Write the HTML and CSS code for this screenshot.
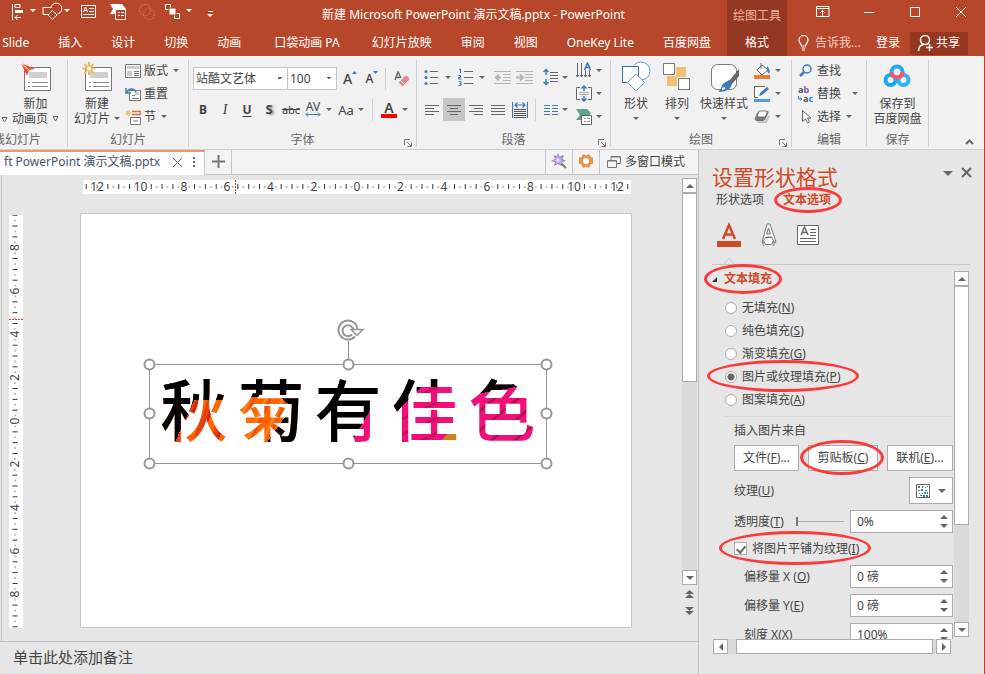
FILE: index.html
```html
<!DOCTYPE html>
<html lang="zh-CN">
<head>
<meta charset="utf-8">
<title>新建 Microsoft PowerPoint 演示文稿.pptx - PowerPoint</title>
<link rel="stylesheet" href="styles.css">
</head>
<body>
<div class="app">
<header class="top">
  <div class="titlebar">
    <div class="qat">
      <svg width="200" height="18" viewBox="0 0 200 18" fill="none" stroke="#fff">
        <path d="M.5 1v16M3 1.500h5v3H3z"/><path d="M3 7.500h8M3 8.500h8M3 9.500h8" /><path d="M3 14.500h6M5.500 12l-2.500 2.500L5.500 17"/>
        <path d="M18 6h6l-3 3z" fill="#fff" stroke="none"/>
        <path d="M36 11.500h-5v-7h9M39 4a5.500 5.500 0 1 1 6.500 7M40.500 7.500l4.500 4.500-4.500 4.500-4.500-4.500z"/>
        <path d="M52 6h6l-3 3z" fill="#fff" stroke="none"/>
        <path d="M69.500 2.500h14v12h-14zM77 5.500h5M77 8.500h5M71 11.500h11M71.500 9l2-5 2 5M72 7.500h3"/>
        <path d="M98 1h12l4 5h-11v5h-5l3-5z" fill="#fff" stroke="none"/><path d="M103.500 6.500h10v10h-10z" fill="#b7472a"/><path d="M106 9.500h2M109 9.500h3M106 12.500h2M109 12.500h3"/>
        <g stroke="#d8745b" stroke-dasharray="2 1"><circle cx="133" cy="7" r="5.500"/><circle cx="137" cy="11" r="5.500"/></g>
        <path d="M153.500 1.500h5v5h-5zM162.500 10.500h5v5h-5z"/><path d="M157 5h7v7h-7z" fill="#fff" stroke="#b7472a"/>
        <path d="M174 6h6l-3 3z" fill="#fff" stroke="none"/>
        <path d="M196 8.500h5"/><path d="M195 11h6l-3 3z" fill="#fff" stroke="none"/>
      </svg>
    </div>
    <div class="title">新建 Microsoft PowerPoint 演示文稿.pptx - PowerPoint</div>
  </div>
  <nav class="tabs">
    <a href="#">Slide</a><a href="#">插入</a><a href="#">设计</a><a href="#">切换</a><a href="#">动画</a><a href="#" class="wide">口袋动画 PA</a><a href="#">幻灯片放映</a><a href="#">审阅</a><a href="#">视图</a><a href="#">OneKey Lite</a><a href="#">百度网盘</a>
  </nav>
  <div class="context"><span>绘图工具</span><a href="#">格式</a></div>
  <div class="winbtns">
    <button aria-label="功能区显示选项"><svg width="14" height="12" fill="none" stroke="#fff"><path d="M.5.5h12.500v10H.5zM.5 2.500h12.500M6.500 10V4.500M4.500 6.500l2-2 2 2"/></svg></button>
    <button aria-label="最小化"><svg width="12" height="12" stroke="#fff"><path d="M1 6.500h10"/></svg></button>
    <button aria-label="最大化"><svg width="12" height="12" fill="none" stroke="#fff"><path d="M1.500 1.500h9v9h-9z"/></svg></button>
    <button aria-label="关闭"><svg width="12" height="12" stroke="#fff"><path d="M1 1l10 10M11 1L1 11"/></svg></button>
  </div>
  <div class="account">
    <a href="#" class="tell"><svg width="11" height="16" fill="none" stroke="#fff" stroke-width="1.200"><path d="M3.500 11c0-2-2.500-3-2.500-6a4.500 4.500 0 0 1 9 0c0 3-2.500 4-2.500 6zM3.500 13h4M4 15h3"/></svg>告诉我...</a>
    <a href="#" class="login">登录</a>
    <button class="share"><svg width="17" height="18" fill="none" stroke="#fff" stroke-width="1.500"><circle cx="8" cy="6" r="4.500"/><path d="M1.500 17c0-4 2-6 5-6.500M9 13.500h7M12.500 10v7"/></svg>共享</button>
  </div>
</header>

<section class="ribbon">
  <div class="group anim">
    <div class="gbody">
      <svg class="edge" width="7" height="6" fill="#fff" stroke="#666"><path d="M1 .5h5L3.500 5z"/></svg>
      <button class="big"><svg width="32" height="32" fill="none"><path d="M4.500 7.500h26v23h-26z" fill="#fff" stroke="#777"/><path d="M9 12h18v6H9z" fill="#d0d0d0"/><path d="M8 22.500h2M12 22.500h16M8 26.500h2M12 26.500h16" stroke="#888"/><path d="M1 3l14 6-6 1-2 6z" fill="#f0502d"/><path d="M1 3l8 7" stroke="#fff"/></svg><span>新加</span><span class="line">动画页 <svg width="7" height="6" fill="#fff" stroke="#666"><path d="M1 .5h5L3.500 5z"/></svg></span></button>
    </div>
    <div class="glabel">线幻灯片</div>
  </div>
  <div class="group slides">
    <div class="gbody">
      <button class="big"><svg width="32" height="32" fill="none"><path d="M4.500 7.500h26v23h-26z" fill="#fff" stroke="#777"/><path d="M9 12h18v6H9z" fill="#d0d0d0"/><path d="M8 22.500h2M12 22.500h16M8 26.500h2M12 26.500h16" stroke="#888"/><g stroke="#e9b962" stroke-width="2"><path d="M8 2v13M1.500 8.500h13M3.500 4l9 9M12.500 4l-9 9"/></g><circle cx="8" cy="8.500" r="2.500" fill="#fff" stroke="#e9b962"/></svg><span>新建</span><span class="line">幻灯片 <i class="tri"></i></span></button>
      <div class="stack">
        <button><svg width="16" height="14" fill="none" stroke="#777"><path d="M.5.5h15v13H.5z" fill="#fff"/><path d="M2 2h12v3H2z" fill="#ccc" stroke="none"/><path d="M2 7h5v5H2z" fill="#ccc" stroke="none"/><path d="M9 7.500h5M9 9.500h5M9 11.500h5"/></svg>版式<i class="tri"></i></button>
        <button><svg width="16" height="14" fill="none" stroke="#777"><path d="M4.500 3.500h11v10h-11z" fill="#fff"/><path d="M10 5h4v3h-4z" fill="#ccc" stroke="none"/><path d="M7 8.500h3M7 11.500h7"/><path d="M2 5c2-4 7-4 9 0M1 1v5h5" stroke="#3c7ab8" stroke-width="1.500"/></svg>重置</button>
        <button><svg width="16" height="16" fill="none" stroke="#777"><path d="M3 1v6M0 4h6M1 2l4 4M5 2L1 6" stroke="#e9b962"/><path d="M7 2.500h8.500v3H7" stroke="#e07030" stroke-width="1.500"/><path d="M5.500 8.500h10v7h-10z" fill="#fff"/><path d="M8 12h5"/></svg>节<i class="tri"></i></button>
      </div>
    </div>
    <div class="glabel">幻灯片</div>
  </div>
  <div class="group font">
    <div class="gbody col">
      <div class="frow">
        <select class="face" aria-label="字体"><option>站酷文艺体</option></select><select class="size" aria-label="字号"><option>100</option></select>
        <button class="grow" aria-label="增大字号"><b>A</b><svg width="5" height="3"><path d="M0 3L2.500 0 5 3z" fill="#3c7ab8"/></svg></button>
        <button class="shrink" aria-label="减小字号"><b>A</b><svg width="5" height="3"><path d="M0 0h5L2.500 3z" fill="#3c7ab8"/></svg></button>
        <i class="sep"></i>
        <button class="clear" aria-label="清除格式"><svg width="16" height="16" fill="none"><path d="M1 9l3-8 3 6M2 6.500h4" stroke="#666" stroke-width="1.500"/><path d="M5 11l6-6q1-1 2 0l2 2q1 1 0 2l-6 6H8l-3-3z" fill="#e8869a"/><path d="M6 9l4 4" stroke="#fff"/></svg></button>
      </div>
      <div class="brow">
        <button><b>B</b></button><button><em>I</em></button><button><b class="u">U</b></button><button><b class="sh">S</b></button><button class="strike"><s>abc</s></button>
        <button class="av"><span>AV</span><svg width="16" height="5" fill="none" stroke="#3c7ab8"><path d="M1 2.500h14M3 .5l-2 2 2 2M13 .5l2 2-2 2"/></svg></button><i class="tri"></i>
        <button class="aa">Aa</button><i class="tri"></i><i class="sep"></i>
        <button class="color"><b>A</b></button><i class="tri"></i>
      </div>
    </div>
    <div class="glabel">字体</div>
    <svg class="launch" width="8" height="8" fill="none" stroke="#777"><path d="M.5 6V.5H6M3 3l4 4M7.500 3.500v4h-4"/></svg>
  </div>
  <div class="group para">
    <div class="gbody">
      <div class="pmain">
        <div class="prow">
          <svg width="70" height="18" fill="none" stroke="#666"><path d="M6 3.500h8M6 9.500h8M6 15.500h8"/><g fill="#3c7ab8" stroke="none"><circle cx="2" cy="3.500" r="1.500"/><circle cx="2" cy="9.500" r="1.500"/><circle cx="2" cy="15.500" r="1.500"/></g><path d="M21 8h6l-3 3z" fill="#666" stroke="none"/><path d="M40 3.500h9M40 9.500h9M40 15.500h9"/><path d="M35 2l1.500-1v4M34.500 7.500h2v2h-2v1.500h3M34.500 13.500h2.500v4h-2.500M35 15.500h2" stroke="#3c7ab8"/><path d="M55 8h6l-3 3z" fill="#666" stroke="none"/></svg>
          <svg width="40" height="18" fill="none" stroke="#b4b4b4"><path d="M0 3.500h17M9 6.500h8M9 9.500h8M9 12.500h8M0 15.500h17M22 3.500h17M31 6.500h8M31 9.500h8M31 12.500h8M22 15.500h17"/><path d="M7 9.500H2M5 6.500l-3 3 3 3M22 9.500h6M26 6.500l3 3-3 3" stroke-width="2"/></svg>
          <svg width="26" height="18" fill="none" stroke="#666"><path d="M7 4.500h8M7 7.500h8M7 10.500h8M7 13.500h8"/><path d="M3 2v5M.5 4L3 1.500 5.500 4M3 11v5M.5 14L3 16.500 5.500 14" stroke="#3c7ab8" stroke-width="1.500"/><path d="M19 8h6l-3 3z" fill="#666" stroke="none"/></svg>
        </div>
        <div class="prow two">
          <button aria-label="左对齐"><svg width="14" height="12" stroke="#666"><path d="M0 1.500h14M0 4.500h9M0 7.500h14M0 10.500h9"/></svg></button>
          <button class="on" aria-label="居中"><svg width="14" height="12" stroke="#666"><path d="M0 1.500h14M3 4.500h8M0 7.500h14M3 10.500h8"/></svg></button>
          <button aria-label="右对齐"><svg width="14" height="12" stroke="#666"><path d="M0 1.500h14M5 4.500h9M0 7.500h14M5 10.500h9"/></svg></button>
          <button aria-label="两端对齐"><svg width="14" height="12" stroke="#666"><path d="M0 1.500h14M0 4.500h14M0 7.500h14M0 10.500h14"/></svg></button>
          <button aria-label="分散对齐"><svg width="16" height="17" fill="none" stroke="#555"><path d="M2 8.500h12M2 10.500h12M2 12.500h12M2 14.500h12M2 16.500h12"/><path d="M.5 1v16M15.500 1v16M3 4h10M5.500 1.500L3 4l2.500 2.500M10.500 1.500L13 4l-2.500 2.500" stroke="#3c7ab8" stroke-width="1.200"/></svg></button>
          <i class="sep"></i>
          <button aria-label="分栏"><svg width="14" height="12" stroke="#3c7ab8"><path d="M0 1.500h6M8 1.500h6M0 4.500h6M8 4.500h6M0 7.500h6M8 7.500h6M0 10.500h6M8 10.500h6"/></svg></button><i class="tri"></i>
        </div>
      </div>
      <div class="stack icons">
        <button aria-label="文字方向"><svg width="16" height="17" fill="none" stroke="#666"><path d="M1.500 1v14M5.500 1v14M9.500 8v7M13.500 8v7M0 13l1.500 2L3 13M4 13l1.500 2L7 13M8 13l1.500 2 1.500-2M12 13l1.500 2 1.500-2"/><path d="M8.500 8l3-7 3 7M9.500 5.500h4" stroke="#3c7ab8" stroke-width="1.500"/></svg><i class="tri"></i></button>
        <button aria-label="对齐文本"><svg width="16" height="17" fill="none" stroke="#666"><path d="M4 2.500H.5v12H4M12 2.500h3.500v12H12" fill="#fff"/><path d="M3 7.500h10M3 9.500h10" stroke="#aaa"/><path d="M8 1v5M5.500 3.500L8 1l2.500 2.500M8 11v5M5.500 13.500L8 16l2.500-2.500" stroke="#3c7ab8" stroke-width="1.500"/></svg><i class="tri"></i></button>
        <button aria-label="转换为 SmartArt"><svg width="16" height="17" fill="none"><path d="M0 1h11l4 4-2 3H6v4H0l4-5z" fill="#5fa58e"/><path d="M5.500 7.500h10v9h-10z" fill="#fff" stroke="#666"/><path d="M8 10.500h2M11 10.500h3M8 13.500h2M11 13.500h3" stroke="#999"/></svg><i class="tri"></i></button>
      </div>
    </div>
    <div class="glabel">段落</div>
    <svg class="launch" width="8" height="8" fill="none" stroke="#777"><path d="M.5 6V.5H6M3 3l4 4M7.500 3.500v4h-4"/></svg>
  </div>
  <div class="group draw">
    <div class="gbody">
      <button class="big"><svg width="30" height="32" fill="none"><circle cx="20" cy="11" r="9" fill="#fff" stroke="#6a9ccb"/><path d="M1.500 6.500h16v16h-16z" fill="#fff" stroke="#3c6fa5"/><path d="M15 14l8.500 8.500L15 31l-8.500-8.500z" fill="#fff" stroke="#6a9ccb"/></svg><span>形状</span><i class="tri"></i></button>
      <button class="big"><svg width="28" height="32"><path d="M13 7h10v10H13zM4 16h10v10H4z" fill="#efc273"/><path d="M.5 3.500h11v11H.5zM15.500 18.500h11v11h-11z" fill="#fff" stroke="#777"/></svg><span>排列</span><i class="tri"></i></button>
      <button class="big"><svg width="32" height="32"><rect x="3.500" y="4.500" width="25" height="25" rx="6" fill="#fff" stroke="#777"/><path d="M21 21l10-12v7l-7 8z" fill="#666"/><path d="M18 22l3-2 3 3c0 6-6 9-14 9 4-2 3-9 8-10z" fill="#3c7ab8"/><path d="M14 29l3-1" stroke="#fff" stroke-width="2"/></svg><span>快速样式</span><i class="tri"></i></button>
      <div class="stack icons">
        <button aria-label="形状填充"><svg width="17" height="17"><path d="M8 3l6 5-6 5-5-5z" fill="#fff" stroke="#666"/><path d="M7 1v6" stroke="#666"/><path d="M13 4q4 4 2 8l-2-3z" fill="#3c7ab8"/><path d="M0 13h16v4H0z" fill="#ed7d31"/></svg><i class="tri"></i></button>
        <button aria-label="形状轮廓"><svg width="17" height="17"><path d="M11 1.500H.5v11H4" fill="#fff" stroke="#666"/><path d="M5 11l1-3 7-6 2 2-7 6z" fill="#3c7ab8"/><path d="M0 14h16v3H0z" fill="#5b9bd5"/></svg><i class="tri"></i></button>
        <button aria-label="形状效果"><svg width="17" height="17"><path d="M3 14h9l3-6" fill="none" stroke="#c5c5c5" stroke-width="2"/><path d="M5 3h8q2 0 1.500 2L12 10q-1 3-3 3H3q-3 0-2-3l2-5z" fill="#777"/><path d="M5 3h7q2 0 1 2l-2 4H3z" fill="#fff" stroke="#777"/></svg><i class="tri"></i></button>
      </div>
    </div>
    <div class="glabel">绘图</div>
    <svg class="launch" width="8" height="8" fill="none" stroke="#777"><path d="M.5 6V.5H6M3 3l4 4M7.500 3.500v4h-4"/></svg>
  </div>
  <div class="group edit">
    <div class="gbody">
      <div class="stack">
        <button><svg width="16" height="16" fill="none" stroke="#3c7ab8"><circle cx="9" cy="6" r="4" stroke-width="1.500"/><path d="M6 9l-4 4" stroke-width="2.500"/></svg>查找</button>
        <button><svg width="16" height="18" class="abac"><text x="0" y="8" fill="#555">a<tspan fill="#8a56a8">b</tspan></text><text x="5" y="17" fill="#555">a<tspan fill="#3c7ab8">c</tspan></text><path d="M.5 11v3h3M2.500 12.500L4 14l-1.500 1.500" fill="none" stroke="#3c7ab8"/></svg>替换<i class="tri far"></i></button>
        <button><svg width="16" height="16"><path d="M4.500 1.500v11l3-2.500 2 4 2-1-2-4h3.500z" fill="#fff" stroke="#666"/></svg>选择<i class="tri"></i></button>
      </div>
    </div>
    <div class="glabel">编辑</div>
  </div>
  <div class="group save">
    <div class="gbody">
      <button class="big"><svg width="28" height="32" fill="none" stroke-width="4"><circle cx="7.500" cy="20" r="5" stroke="#1aa7f0"/><circle cx="20.500" cy="20" r="5" stroke="#30b4f5"/><circle cx="14" cy="12" r="5.500" stroke="#25a9f2"/><path d="M8.500 12a5.500 5.500 0 0 0 11 0" stroke="#f5556d"/></svg><span>保存到</span><span>百度网盘</span></button>
    </div>
    <div class="glabel">保存</div>
  </div>
  <div class="rest"><svg width="9" height="6" fill="none" stroke="#666" stroke-width="2"><path d="M1 5l3.500-3.500L8 5"/></svg></div>
</section>

<div class="work">
  <main class="left">
    <div class="doctabs">
      <div class="doc"><span>ft PowerPoint 演示文稿.pptx</span><svg width="11" height="11" stroke="#666"><path d="M1 1l9 9M10 1l-9 9"/></svg><svg width="3" height="11" fill="#666"><path d="M0 0h2v2H0zM0 4h2v2H0zM0 8h2v2H0z"/></svg></div>
      <button class="plus" aria-label="新建标签"><svg width="13" height="13" stroke="#777" stroke-width="2"><path d="M0 6.500h13M6.500 0v13"/></svg></button>
      <span class="fill"></span>
      <button class="tool" aria-label="魔法"><svg width="16" height="16"><path d="M9 9l6 6" stroke="#777" stroke-width="2"/><path d="M7 0l1.500 3.500L13 2l-1.500 4L15 8l-4 1 0 4-4-2-4 2 1-4-4-1 4-2-1.500-4L6 3.500z" fill="#888"/><path d="M7 2l1.200 2.500 3-1-1 3 2.500 1.500-2.500.7.300 2.800L7 10 4 11.500 5 8.700 2 8l2.500-1.500-1-3L6 4.500z" fill="#c9a3ff"/><circle cx="7" cy="7" r="1.500" fill="#f3eaff"/></svg></button>
      <button class="tool" aria-label="设置"><svg width="16" height="16"><path d="M5 1l3 1.500L11 1l2 3.500h2V11h-2l-2 4-3-1.500L5 15l-2-4H1V4.500h2z" fill="#e8914a"/><circle cx="8" cy="8" r="3" fill="#fff"/></svg></button>
      <button class="multi"><svg width="14" height="13" fill="none" stroke="#777"><path d="M4 4V.5h9.500v7H10" /><path d="M.5 4.500h9v7h-9z"/><path d="M4 1h9M1 5h8"/></svg>多窗口模式</button>
    </div>
    <div class="stage">
      <svg class="hruler" width="100%" height="14" viewBox="0 0 549 14" preserveAspectRatio="xMinYMid slice">
        <defs><pattern id="ht" x="273.500" width="10.830" height="14" patternUnits="userSpaceOnUse"><path d="M.5 4v5" stroke="#333"/><path d="M5.900 6v2" stroke="#888"/></pattern></defs>
        <rect width="549" height="14" fill="#fff"/><rect width="549" height="14" fill="url(#ht)"/>
        <g class="nums"><text x="14" y="11">12</text><text x="57.500" y="11">10</text><text x="101" y="11">8</text><text x="144" y="11">6</text><text x="187.500" y="11">4</text><text x="231" y="11">2</text><text x="274" y="11">0</text><text x="317.500" y="11">2</text><text x="361" y="11">4</text><text x="404" y="11">6</text><text x="447.500" y="11">8</text><text x="491" y="11">10</text><text x="534" y="11">12</text></g>
        <path d="M152.500 0v14" stroke="#c8442a" stroke-dasharray="2 1"/>
      </svg>
      <svg class="vruler" width="14" height="413">
        <defs><pattern id="vt" y="205.500" width="14" height="10.830" patternUnits="userSpaceOnUse"><path d="M3.500 .5h5" stroke="#333"/><path d="M5 5.900h2" stroke="#888"/></pattern></defs>
        <rect width="14" height="413" fill="#fff"/><rect width="14" height="413" fill="url(#vt)"/>
        <g class="nums"><text transform="translate(10 32.500) rotate(-90)">8</text><text transform="translate(10 76) rotate(-90)">6</text><text transform="translate(10 119) rotate(-90)">4</text><text transform="translate(10 162.500) rotate(-90)">2</text><text transform="translate(10 206) rotate(-90)">0</text><text transform="translate(10 249) rotate(-90)">2</text><text transform="translate(10 292.500) rotate(-90)">4</text><text transform="translate(10 336) rotate(-90)">6</text><text transform="translate(10 379) rotate(-90)">8</text></g>
        <path d="M0 104.500h14" stroke="#c8442a" stroke-dasharray="2 1"/>
      </svg>
      <div class="slide">
        <div class="shape">
          <div class="art"><span class="c1">秋</span><span class="c2">菊</span><span class="c3">有</span><span class="c4">佳</span><span class="c5">色</span></div>
          <svg class="handles" width="410" height="150" fill="none" stroke="#969696"><path d="M6.500 43.500h397v99h-397zM205.500 43V20"/><g fill="#fff" stroke-width="2"><circle cx="6.500" cy="43.500" r="5"/><circle cx="205.500" cy="43.500" r="5"/><circle cx="403.500" cy="43.500" r="5"/><circle cx="6.500" cy="92.500" r="5"/><circle cx="403.500" cy="92.500" r="5"/><circle cx="6.500" cy="142.500" r="5"/><circle cx="205.500" cy="142.500" r="5"/><circle cx="403.500" cy="142.500" r="5"/></g><path d="M212 15.500a9.500 9.500 0 1 1 2.500-7M209 13.500a5.500 5.500 0 1 1 1.500-4" stroke-width="2"/><path d="M208 8.500h12l-6 6z" fill="#fff" stroke-width="1.500"/></svg>
        </div>
      </div>
      <div class="vscroll"><button aria-label="向上"><i class="up"></i></button><div class="thumb"></div><div class="track"></div><button aria-label="向下"><i class="down"></i></button></div>
      <div class="pager"><svg width="9" height="30" fill="#666"><path d="M4.500 0L9 4H0zM4.500 4L9 8H0zM0 17h9l-4.500 4zM0 21h9l-4.500 4z"/></svg></div>
    </div>
    <div class="notes">单击此处添加备注</div>
  </main>

  <aside class="pane">
    <div class="phead"><h1>设置形状格式</h1><i class="down big"></i><button aria-label="关闭窗格"><svg width="11" height="11" stroke="#666" stroke-width="2"><path d="M1 1l9 9M10 1l-9 9"/></svg></button></div>
    <div class="ptabs"><a href="#">形状选项</a><a href="#" class="act ring r1">文本选项</a></div>
    <div class="picons">
      <button aria-label="文本填充与轮廓"><svg width="24" height="26" fill="none"><path d="M6 17L12 3l6 14M8 12.500h8" stroke="#d04a26" stroke-width="2.500"/><path d="M0 19h24v6H0z" fill="#d04a26"/></svg></button>
      <button aria-label="文本效果"><svg width="18" height="26" fill="#fff" stroke="#777"><path d="M7 2h3l6 18h-3l-1.500-5h-5L5 20H2z"/><path d="M8.500 6l2 6h-4z" fill="#e6e6e6"/><path d="M5.500 15.500h6l2 3-2 4h-6l-2-4z"/><path d="M2 20l2 4M15 20l-2 4"/></svg></button>
      <button aria-label="布局属性"><svg width="22" height="22" fill="none" stroke="#666"><path d="M.5 1.500h21v19H.5z" fill="#fff"/><path d="M4 11l3.500-8L11 11M5.500 8.500h4" stroke-width="1.500"/><path d="M13 5.500h6M13 8.500h6M13 11.500h6M3 14.500h16M3 17.500h16"/></svg></button>
    </div>
    <svg class="notch" width="100%" height="8" fill="none" stroke="#c6c6c6"><path d="M0 7.500h400M12 7l5-6 5 6"/></svg>
    <div class="pbody">
      <div class="pscroll">
        <div class="sect"><i class="corner"></i><span class="ring r2">文本填充</span></div>
        <div class="radios">
          <label><input type="radio" name="fill"><span>无填充(<u>N</u>)</span></label>
          <label><input type="radio" name="fill"><span>纯色填充(<u>S</u>)</span></label>
          <label><input type="radio" name="fill"><span>渐变填充(<u>G</u>)</span></label>
          <label class="ring r3"><input type="radio" name="fill" checked><span>图片或纹理填充(<u>P</u>)</span></label>
          <label><input type="radio" name="fill"><span>图案填充(<u>A</u>)</span></label>
        </div>
        <hr>
        <div class="opts">
          <p>插入图片来自</p>
          <div class="btns"><button>文件(<u>F</u>)...</button><button class="ring r4">剪贴板(<u>C</u>)</button><button>联机(<u>E</u>)...</button></div>
          <div class="row tex"><span>纹理(<u>U</u>)</span><button class="texture" aria-label="纹理"><svg width="14" height="14"><path d="M.5.5h13v13H.5z" fill="#fff" stroke="#666"/><path d="M2 2h2v2H2zM6 2h1v2H6zM9 3h1v1H9zM11 2h1v1h-1zM2 6h2v1H2zM5 5h2v2H5zM9 6h2v1H9zM3 9h1v1H3zM6 9h1v1H6zM8 8h2v2H8zM11 8h1v2h-1zM4 11h2v1H4zM7 11h2v2H7zM10 11h2v2h-2z" fill="#3c7ab8"/></svg><i class="down"></i></button></div>
          <div class="row"><label for="tr">透明度(<u>T</u>)</label><input class="slider" type="range" value="0" aria-label="透明度"><div class="spin"><input id="tr" value="0%"><span><i class="up"></i><i class="down"></i></span></div></div>
          <label class="check ring r5"><input type="checkbox" checked><span>将图片平铺为纹理(<u>I</u>)</span></label>
          <div class="row sub"><label for="ox">偏移量 X (<u>O</u>)</label><div class="spin"><input id="ox" value="0 磅"><span><i class="up"></i><i class="down"></i></span></div></div>
          <div class="row sub"><label for="oy">偏移量 Y(<u>E</u>)</label><div class="spin"><input id="oy" value="0 磅"><span><i class="up"></i><i class="down"></i></span></div></div>
          <div class="row sub"><label for="sx">刻度 X(X)</label><div class="spin"><input id="sx" value="100%"><span><i class="up"></i><i class="down"></i></span></div></div>
        </div>
      </div>
      <div class="vscroll"><button aria-label="向上"><i class="up"></i></button><div class="thumb"></div><div class="track"></div><button aria-label="向下"><i class="down"></i></button></div>
    </div>
    <div class="hscroll"><button aria-label="向左"><i class="lt"></i></button><div class="track"></div><div class="thumb"></div><div class="track end"></div><button aria-label="向右"><i class="rt"></i></button></div>
  </aside>
</div>
</div>
</body>
</html>
```
FILE: styles.css
```css
* { box-sizing: border-box; }
body { margin: 0; font: 12px/16px "Noto Sans", "Noto Sans CJK SC", sans-serif; color: #444; background: #e6e6e6; }
button { font: inherit; color: inherit; background: none; border: 0; padding: 0; margin: 0; }
a { color: inherit; text-decoration: none; }
svg { display: block; flex: none; }
i { font-style: normal; }
.app { height: 100vh; display: flex; flex-direction: column; overflow: hidden; border-right: 1px solid #c8391d; }

.top { display: grid; grid-template-columns: 1fr 60px 197px; grid-template-rows: 28px 28px; background: #b7472a; color: #fff; flex: none; }
.titlebar { display: flex; align-items: center; min-width: 0; }
.qat { flex: 0 0 220px; padding-left: 12px; padding-bottom: 4px; }
.qat svg { overflow: visible; }
.title { flex: 1; text-align: center; white-space: nowrap; padding-top: 2px; }
.tabs { grid-row: 2; display: flex; justify-content: flex-end; align-items: center; gap: 29px; padding: 2px 16px 0 0; white-space: nowrap; overflow: hidden; }
.tabs .wide { padding: 0 3px 0 4px; }
.context { grid-column: 2; grid-row: 1 / 3; background: #943822; display: grid; grid-template-rows: 28px 26px; padding-top: 2px; align-items: center; justify-items: center; }
.context span { color: #f3b49f; }
.winbtns { grid-column: 3; grid-row: 1; display: grid; grid-template-columns: repeat(4, 1fr); padding: 0 0 4px 13px; }
.winbtns button { display: grid; place-items: center; }
.account { grid-column: 3; grid-row: 2; display: flex; align-items: center; padding: 2px 0 0 11px; white-space: nowrap; }
.tell { display: flex; gap: 6px; color: #f3cfc4; width: 78px; }
.login { width: 34px; }
.share { background: #943822; width: 58px; height: 23px; display: flex; align-items: center; gap: 2px; padding-left: 7px; }

.ribbon { flex: none; display: grid; grid-template-columns: 68px 121px 228px 194px 181px 75px 62px 1fr; height: 94px; padding: 4px 0 2px; background: #f1f1f1; border-bottom: 1px solid #d0d0d0; }
.group { position: relative; border-right: 1px solid #d0d0d0; display: flex; flex-direction: column; white-space: nowrap; min-width: 0; }
.gbody { flex: 1; display: flex; min-height: 0; }
.glabel { text-align: center; color: #666; line-height: 14px; }
.tri { width: 0; height: 0; border: 3px solid transparent; border-top-color: #666; border-bottom: 0; display: inline-block; flex: none; }
.launch { position: absolute; right: 4px; bottom: 0; }
.big { display: flex; flex-direction: column; align-items: center; line-height: 15px; height: 71px; }
.big > svg { margin-bottom: 4px; }
.big > .tri { margin-top: 6px; }
.line { display: flex; align-items: center; gap: 4px; }
.anim .glabel { text-align: left; text-indent: -7px; overflow: hidden; }
.anim .edge { margin: 57px 4px 0 1px; }
.slides .gbody { padding-left: 6px; gap: 5px; }
.stack { display: flex; flex-direction: column; justify-content: center; padding-bottom: 6px; gap: 7px; }
.stack button { display: flex; align-items: center; gap: 3px; height: 16px; }
.stack .tri { margin-left: 2px; }
.icons button { gap: 2px; }
.font .gbody { flex-direction: column; padding-left: 4px; }
.frow { display: flex; align-items: center; margin-top: 7px; }
select { appearance: none; height: 23px; border: 1px solid #c6c6c6; border-radius: 0; font: inherit; color: #444; padding: 0 2px; background: conic-gradient(from -45deg at 50% 100%, #666 90deg, transparent 0) no-repeat right 4px center / 6px 3px #fff; }
.face { width: 95px; }
.size { width: 50px; margin-left: -1px; }
.frow button { display: flex; width: 22px; justify-content: center; }
.frow b { font-size: 14px; font-weight: 500; }
.frow .grow { margin-left: 2px; }
.frow .shrink b { font-size: 12px; }
.sep { width: 1px; height: 22px; background: #d0d0d0; flex: none; }
.frow .sep { margin: 0 5px 0 2px; }
.brow { display: flex; align-items: center; margin-top: 8px; height: 23px; margin-left: -1px; }
.brow button { width: 22px; }
.brow em { font: italic 14px "Liberation Serif", serif; }
.brow .u { text-decoration: underline; text-underline-offset: 2px; }
.brow .sh { text-shadow: 2px 1px 2px #999; font-size: 13px; }
.brow .strike { font-size: 11px; }
.brow .av { width: 22px; margin-right: 2px; display: flex; flex-direction: column; align-items: center; line-height: 10px; }
.brow .aa { width: 24px; font-size: 13px; margin-left: 2px; }
.brow .aa + .tri { margin-left: 0; }
.brow .sep { margin: 0 5px 0 8px; }
.brow .color b { display: block; margin: 0 3px; border-bottom: 4px solid #f00; font-size: 14px; line-height: 13px; font-weight: 600; }
.brow .color { width: 22px; margin-right: 2px; }
.para .gbody { padding-left: 7px; gap: 8px; }
.pmain { padding-top: 8px; width: 144px; }
.prow { display: flex; height: 18px; }
.prow.two { height: 23px; margin: 12px 0 0 -3px; align-items: center; }
.two button { width: 22px; height: 23px; display: grid; place-items: center; flex: none; }
.two .on { background: #c6c6c6; }
.two .sep { margin: 0 4px; }
.prow svg + svg { margin-right: 9px; }
.draw .gbody { padding-left: 10px; gap: 12px; }
.draw .big + .big + .big { margin-left: -3px; }
.draw .big + .stack { margin-left: -6px; }
.edit .gbody { padding-left: 6px; }
.edit .far { margin-left: 8px; }
.abac text { font: bold 9px "Noto Sans", sans-serif; }
.save .gbody { justify-content: center; }
.rest { display: flex; align-items: flex-end; justify-content: flex-end; padding: 0 10px 2px; }

.work { flex: 1; display: grid; grid-template-columns: 1fr 285px; min-height: 0; }
.left { display: flex; flex-direction: column; min-width: 0; border-right: 1px solid #c0c0c0; }
.doctabs { display: flex; height: 25px; flex: none; background: #f3f3f3; border-bottom: 1px solid #c6c6c6; }
.doctabs > * { border-right: 1px solid #c6c6c6; display: flex; align-items: center; justify-content: center; white-space: nowrap; }
.doc { width: 205px; background: #fff; border-top: 2px solid #ee9674; padding: 0 8px 3px 4px; gap: 6px; margin-bottom: -1px; color: #44546a; }
.doc span { flex: 1; }
.doc svg + svg { margin-left: 4px; }
.plus, .tool { width: 27px; padding-bottom: 2px; }
.doctabs .fill { flex: 1; }
.doctabs .multi { width: 98px; border-right: 0; gap: 4px; padding-right: 6px; }
.stage { flex: 1; display: grid; min-height: 0; grid-template-columns: 14px 1fr 15px; grid-template-rows: 14px 1fr 48px; padding: 5px 1px 0 7px; border-left: 1px solid #c6c6c6; margin-left: 1px; }
.hruler { grid-column: 2; margin-left: 60px; width: calc(100% - 111px); }
.vruler { grid-column: 1; grid-row: 2 / 4; margin-top: 21px; }
.slide { grid-column: 2; grid-row: 2 / 4; margin: 19px 50px 13px 57px; background: #fff; border: 1px solid #c6c6c6; position: relative; }
.nums text { font: 12px "Noto Sans", sans-serif; fill: #444; text-anchor: middle; stroke: #fff; stroke-width: 3px; paint-order: stroke; }
.shape { position: absolute; left: 68px; top: 150px; width: 398px; height: 100px; }
.handles { position: absolute; left: -6px; top: -43px; overflow: visible; }
.art { display: flex; justify-content: center; gap: 10px; font: 500 67px/86px "Noto Sans CJK SC", sans-serif; }
.art span { color: transparent; background-clip: text; -webkit-background-clip: text; }
.c1 { background-image: linear-gradient(115deg, #000 47%, transparent 47%), linear-gradient(#000 42%, transparent 42%), repeating-linear-gradient(110deg, #f60 0 7px, #e8400c 9px 12px, #c8190c 16px); }
.c2 { background-image: linear-gradient(#000 38%, transparent 38%), linear-gradient(125deg, transparent 66%, #000 66%), linear-gradient(40deg, transparent 62%, #000 62%), repeating-linear-gradient(115deg, #f60 0 8px, #f98a1c 10px, #e8400c 15px); }
.c3 { background-image: linear-gradient(120deg, #000 70%, #f0107a 70%); }
.c4 { background-image: linear-gradient(135deg, #000 34%, transparent 34%), linear-gradient(#000 27%, transparent 27%), linear-gradient(135deg, transparent 82%, #d08020 82%), repeating-linear-gradient(155deg, #f0107a 0 10px, #c00c50 12px, #f0107a 14px); }
.c5 { background-image: linear-gradient(170deg, #000 32%, transparent 32%), repeating-linear-gradient(140deg, #f0107a 0 11px, #a80c48 13px, #f0107a 15px); }

.vscroll { width: 15px; display: flex; flex-direction: column; background: #dadada; }
.stage > .vscroll { grid-column: 3; grid-row: 1 / 3; margin-top: -2px; margin-bottom: 8px; }
.vscroll button, .hscroll button { width: 15px; height: 15px; flex: none; border: 1px solid #ababab; background: #fff; display: grid; place-items: center; }
.thumb { background: #fff; border: 1px solid #ababab; }
.vscroll .thumb { flex: 189; }
.vscroll .track { flex: 190; }
.pager { grid-column: 3; grid-row: 3; padding: 0 3px; margin-top: -3px; }
.up, .down, .lt, .rt { width: 0; height: 0; border: 4px solid transparent; display: block; flex: none; }
.up { border-bottom-color: #666; border-top: 0; }
.down { border-top-color: #666; border-bottom: 0; }
.lt { border-right-color: #666; border-left: 0; }
.rt { border-left-color: #666; border-right: 0; }
.notes { flex: none; height: 33px; border-top: 1px solid #c0c0c0; padding: 7px 13px; font-size: 15px; }

.pane { display: flex; flex-direction: column; padding: 15px 12px 0 13px; min-width: 0; white-space: nowrap; }
.phead { display: flex; height: 24px; gap: 8px; }
.phead h1 { margin: 0; flex: 1; font: 21px/24px "Noto Sans", "Noto Sans CJK SC", sans-serif; color: #d04a26; }
.phead .down { border-width: 5px 5px 0; margin-top: 6px; }
.phead button { height: 14px; padding-top: 1px; }
.ptabs { display: flex; gap: 19px; padding: 3px 4px 1px; }
.act { color: #d04a26; font-weight: bold; }
.picons { display: flex; align-items: center; gap: 19px; padding-left: 5px; margin-top: 12px; height: 28px; }
.notch { margin-top: 8px; overflow: hidden; width: 258px; }
.pbody { display: flex; height: 374px; padding: 1px 3px 0 0; }
.pscroll { flex: 1; min-width: 0; height: 373px; margin-left: -10px; padding-left: 10px; clip-path: inset(-10px 0 0 -10px); }
.pbody .vscroll { margin: 5px 0 2px 1px; }
.pbody .thumb { flex: 240; }
.pbody .track { flex: 98; }
.sect { display: flex; align-items: center; gap: 7px; padding-top: 2px; color: #d04a26; font-weight: bold; height: 24px; }
.corner { width: 0; height: 0; border-left: 5px solid transparent; border-bottom: 5px solid #333; }
.radios { padding: 6px 0 0 13px; display: flex; flex-direction: column; align-items: flex-start; }
.radios label, .check { display: flex; align-items: center; gap: 5px; height: 23px; }
input { margin: 0; font: inherit; color: #444; }
input[type=radio] { appearance: none; width: 12px; height: 12px; border: 1px solid #ababab; border-radius: 50%; background: #fff; }
input[type=radio]:checked { background: radial-gradient(#666 0 3px, #fff 4px); }
hr { border: 0; border-top: 1px solid #dadada; margin: 5px 0 0 12px; }
.opts { padding-left: 22px; }
.opts p { margin: 6px 0; }
.btns { display: grid; grid-template-columns: 65px 70px 66px; justify-content: space-between; }
.btns button, .texture { height: 26px; background: #fdfdfd; border: 1px solid #ababab; }
.row { display: flex; align-items: center; height: 23px; margin-top: 6px; }
.row > :first-child { flex: 1; }
.row.tex { height: 27px; }
.texture { width: 44px; height: 27px; display: flex; align-items: center; justify-content: center; gap: 8px; }
.slider { appearance: none; width: 48px; height: 14px; margin-right: 6px; background: linear-gradient(#ababab, #ababab) center / 100% 1px no-repeat; }
.slider::-webkit-slider-thumb { appearance: none; width: 2px; height: 9px; background: #777; }
.spin { width: 103px; height: 23px; display: flex; background: #fff; border: 1px solid #ababab; padding-right: 4px; }
.spin input { width: 80px; flex: 1; border: 0; background: none; padding: 0 6px; }
.spin span { display: flex; flex-direction: column; justify-content: center; gap: 5px; }
.check { margin-top: 4px; width: max-content; }
.check input { appearance: none; width: 13px; height: 13px; border: 1px solid #ababab; background: #fff; display: grid; place-items: center; }
.check input::after { content: ""; width: 4px; height: 7px; border: solid #666; border-width: 0 2px 2px 0; transform: rotate(40deg); }
.sub { padding-left: 10px; }
.check + .sub { margin-top: 5px; }
.hscroll { display: flex; margin: 0 21px 0 1px; }
.hscroll .track { width: 8px; background: #dadada; }
.hscroll .end { width: 3px; }
.hscroll .thumb { flex: 1; }

.ring { position: relative; }
.ring::after { content: ""; position: absolute; border: 3px solid #fb3b3b; border-radius: 50%; pointer-events: none; }
.r1::after { inset: -5px -11px -5px -9px; }
.r2::after { inset: -7px -10px -7px -20px; }
.r3::after { inset: -5px -19px -4px -18px; }
.r4::after { inset: -6px -7px -5px -9px; }
.r5::after { inset: -6px -12px -5px -15px; }
```
